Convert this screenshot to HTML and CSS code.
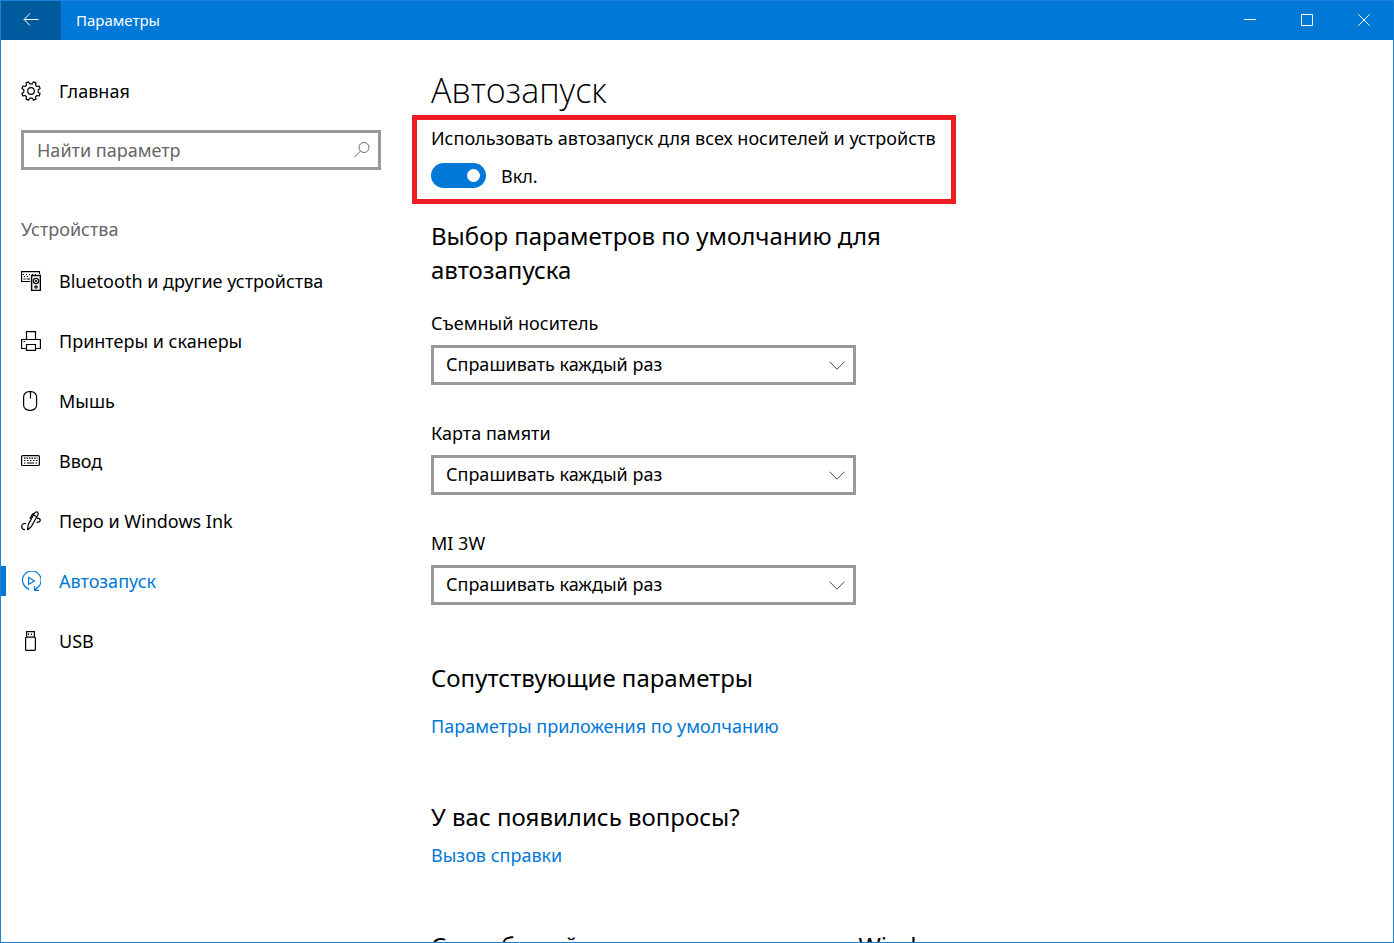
FILE: index.html
```html
<!DOCTYPE html>
<html lang="ru">

<head>
    <meta charset="utf-8">
    <link rel="stylesheet" href="styles.css">
    <title>Параметры</title>
</head>

<body>
    <div class="window">
        <header class="titlebar">
            <button class="back" aria-label="Назад">
                <svg width="16" height="14" viewBox="0 0 16 14"><path d="M15.500 6.500H1M7 .5L1 6.500L7 12.500"/></svg>
            </button>
            <span class="caption">Параметры</span>
            <div class="controls">
                <button aria-label="Свернуть"><svg width="12" height="12" viewBox="0 0 12 12"><path d="M0 5.500H12"/></svg></button>
                <button aria-label="Развернуть"><svg width="12" height="12" viewBox="0 0 12 12"><path d="M.5 .5H11.500V11.500H.5Z"/></svg></button>
                <button aria-label="Закрыть"><svg width="12" height="12" viewBox="0 0 12 12"><path d="M.3 .3L11.700 11.700M11.700 .3L.3 11.700"/></svg></button>
            </div>
        </header>

        <div class="content">
            <nav class="sidebar">
                <a class="item" href="#">
                    <svg class="icon" viewBox="0 0 20 20">
                        <path d="M7.500 .9L8.700 2.800H11.300L12.500 .9L15 1.900L14.500 4.200L15.800 5.500L18.100 5L19.100 7.500L17.200 8.700V11.300L19.100 12.500L18.100 15L15.800 14.500L14.500 15.800L15 18.100L12.500 19.100L11.300 17.200H8.700L7.500 19.100L5 18.100L5.500 15.800L4.200 14.500L1.900 15L.9 12.500L2.800 11.300V8.700L.9 7.500L1.900 5L4.200 5.500L5.500 4.200L5 1.900Z" stroke-linejoin="round"/>
                        <circle cx="10" cy="10" r="3.300"/>
                    </svg>
                    <span>Главная</span>
                </a>

                <div class="search">
                    <input type="text" placeholder="Найти параметр" aria-label="Найти параметр">
                    <svg class="search-icon" width="16" height="16" viewBox="0 0 16 16"><circle cx="10" cy="5.500" r="5"/><path d="M6.300 9.200L.3 15.200"/></svg>
                </div>

                <div class="group">Устройства</div>

                <a class="item" href="#">
                    <svg class="icon" viewBox="0 0 20 20">
                        <path d="M9 10.500H.6V.6H18.500V3"/>
                        <path d="M2 3.500H17" stroke-dasharray="1 2"/><path d="M3 5.500H9" stroke-dasharray="1 2"/><path d="M2.500 8H4.500M5.500 8H9"/>
                        <path d="M10.600 4.600H19.400V19.400H10.600Z" stroke-width="1.500"/>
                        <circle cx="15" cy="10" r="2.600"/><circle cx="15" cy="10" r=".5"/><circle cx="15" cy="16" r="1.200"/>
                    </svg>
                    <span>Bluetooth и другие устройства</span>
                </a>
                <a class="item" href="#">
                    <svg class="icon" viewBox="0 0 20 20">
                        <path d="M5.500 8V.6H14.500V8M5 17.500H.6V8.500H19.400V17.500H15M5.500 13.500H14.500V19.400H5.500ZM2.500 10.500H4"/>
                    </svg>
                    <span>Принтеры и сканеры</span>
                </a>
                <a class="item" href="#">
                    <svg class="icon" viewBox="0 0 20 20"><rect x="2.600" y=".6" width="13" height="18.800" rx="5.500"/><path d="M9.500 1V7.500"/></svg>
                    <span>Мышь</span>
                </a>
                <a class="item" href="#">
                    <svg class="icon" viewBox="0 0 20 20">
                        <rect x=".6" y="4.600" width="17.800" height="9.900" rx="1"/>
                        <path d="M3 7.200H16.500" stroke-dasharray="1.500 1"/><path d="M3 9.500H16.500" stroke-dasharray="1.500 1.500"/><path d="M3 12H4.500M6 12H13M14.500 12H16"/>
                    </svg>
                    <span>Ввод</span>
                </a>
                <a class="item" href="#">
                    <svg class="icon" viewBox="0 0 20 20">
                        <path d="M6.500 19L7.300 13.500L13.500 2.200Q15 .2 16.500 1.100Q17.800 2.200 16.800 4L10.500 15.400L6.500 19M8.800 7.800L11.500 3.200Q12 2.500 13.200 2.700M12.500 4L15.800 5.800"/>
                        <path d="M5 12.300Q.7 12.300 .7 15.600Q.8 18.600 4 18.900M16 7.200Q19.300 7.400 19.300 9.300Q19.200 11.200 15.500 11.400"/>
                    </svg>
                    <span>Перо и Windows Ink</span>
                </a>
                <a class="item active" href="#">
                    <svg class="icon" viewBox="0 0 20 20">
                        <path d="M7.500 19V17.900A9.300 9.300 0 1 1 16.800 16.300L13.700 19.200M13.600 15V19.400H18"/>
                        <path d="M7.600 6.500L13.400 10L7.600 13.500Z"/>
                    </svg>
                    <span>Автозапуск</span>
                </a>
                <a class="item" href="#">
                    <svg class="icon" viewBox="0 0 20 20"><path d="M5.600 6V.6H13.400V6"/><rect x="4.600" y="6.100" width="9.800" height="13.300" rx="1"/><path d="M7.500 2.500V4M10.500 2.500V4"/></svg>
                    <span>USB</span>
                </a>
            </nav>

            <main class="page">
                <h1>Автозапуск</h1>

                <section class="highlight">
                    <label for="autoplay">Использовать автозапуск для всех носителей и устройств</label>
                    <div class="toggle-row">
                        <input class="toggle" type="checkbox" id="autoplay" checked>
                        <span>Вкл.</span>
                    </div>
                </section>

                <h2 class="defaults">Выбор параметров по умолчанию для автозапуска</h2>

                <div class="field">
                    <label for="removable">Съемный носитель</label>
                    <div class="dropdown">
                        <select id="removable"><option>Спрашивать каждый раз</option></select>
                        <svg class="chevron" width="16" height="9" viewBox="0 0 16 9"><path d="M.5 .7L8 8.200L15.500 .7"/></svg>
                    </div>
                </div>
                <div class="field">
                    <label for="card">Карта памяти</label>
                    <div class="dropdown">
                        <select id="card"><option>Спрашивать каждый раз</option></select>
                        <svg class="chevron" width="16" height="9" viewBox="0 0 16 9"><path d="M.5 .7L8 8.200L15.500 .7"/></svg>
                    </div>
                </div>
                <div class="field">
                    <label for="phone">MI 3W</label>
                    <div class="dropdown">
                        <select id="phone"><option>Спрашивать каждый раз</option></select>
                        <svg class="chevron" width="16" height="9" viewBox="0 0 16 9"><path d="M.5 .7L8 8.200L15.500 .7"/></svg>
                    </div>
                </div>

                <h2 class="related">Сопутствующие параметры</h2>
                <a class="link" href="#">Параметры приложения по умолчанию</a>

                <h2>У вас появились вопросы?</h2>
                <a class="link" href="#">Вызов справки</a>

                <h2 class="feedback">Способствуйте совершенствованию Windows</h2>
            </main>
        </div>
    </div>
</body>

</html>
```
FILE: styles.css
```css
* {
    box-sizing: border-box;
}

body {
    margin: 0;
    font-family: "Noto Sans", "Open Sans", sans-serif;
    font-size: 18px;
    line-height: 24px;
    color: #000;
    background: #fff;
}

svg {
    display: block;
    fill: none;
    stroke: currentColor;
}

.window {
    display: flex;
    flex-direction: column;
    height: 100vh;
    border: 1px solid #1883d9;
    overflow: hidden;
}

/* title bar */
.titlebar {
    display: flex;
    flex: none;
    align-items: center;
    height: 39px;
    background: #0078d7;
    color: #fff;
}

.titlebar button {
    display: flex;
    align-items: center;
    justify-content: center;
    height: 39px;
    padding: 0 1px 2px 0;
    border: 0;
    background: none;
    color: #fff;
}

.titlebar .back {
    width: 60px;
    background: #005a9e;
}

.caption {
    margin-left: 15px;
    padding-bottom: 2px;
    font-size: 15px;
}

.controls {
    display: flex;
    margin-left: auto;
}

.controls button {
    width: 57px;
}

.content {
    display: flex;
    flex: 1;
    min-height: 0;
}

/* left menu */
.sidebar {
    flex: none;
    width: 430px;
    padding-top: 21px;
}

.item {
    display: flex;
    align-items: center;
    gap: 18px;
    height: 60px;
    padding-left: 20px;
    color: #000;
    text-decoration: none;
}

.icon {
    width: 20px;
    height: 20px;
    stroke-width: 1.2;
}

.active {
    color: #0078d7;
    background: linear-gradient(#0078d7, #0078d7) left center / 5px 30px no-repeat;
}

.search {
    position: relative;
    width: 360px;
    margin: 9px 0 0 20px;
}

.search input {
    display: block;
    width: 100%;
    height: 40px;
    padding: 0 40px 0 13px;
    border: 3px solid #999;
    font: inherit;
}

.search input::placeholder {
    color: #666;
    opacity: 1;
}

.search-icon {
    position: absolute;
    top: 12px;
    right: 11px;
    color: #666;
}

.group {
    margin: 47px 0 10px 20px;
    color: #666;
}

/* settings page */
.page {
    flex: 1;
    padding-top: 25px;
}

h1 {
    margin: 0;
    font-family: "Open Sans", "Noto Sans", sans-serif;
    font-size: 34px;
    font-weight: 300;
    line-height: 50px;
}

h2 {
    max-width: 525px;
    margin: 62px 0 9px;
    font-size: 24px;
    font-weight: 400;
    line-height: 34px;
}

h2.defaults {
    margin: 15px 0 24px;
}

h2.related {
    margin: 56px 0 19px;
}

h2.feedback {
    white-space: nowrap;
}

label {
    display: block;
}

.highlight {
    width: 544px;
    margin-left: -19px;
    padding: 6px 14px 11px;
    border: 5px solid #ed1c24;
}

.toggle-row {
    display: flex;
    align-items: center;
    gap: 15px;
    margin-top: 13px;
}

.toggle {
    appearance: none;
    display: flex;
    align-items: center;
    justify-content: flex-end;
    width: 55px;
    height: 25px;
    margin: 0;
    padding-right: 6px;
    border-radius: 13px;
    background: #0078d7;
}

.toggle::before {
    content: "";
    width: 13px;
    height: 13px;
    border-radius: 50%;
    background: #fff;
}

.field + .field {
    margin-top: 36px;
}

.dropdown {
    position: relative;
    width: 425px;
    margin-top: 10px;
}

select {
    appearance: none;
    display: block;
    width: 100%;
    height: 40px;
    padding: 0 40px 2px 12px;
    border: 3px solid #999;
    border-radius: 0;
    background: #fff;
    color: #000;
    font: inherit;
}

.chevron {
    position: absolute;
    top: 16px;
    right: 11px;
    color: #444;
    pointer-events: none;
}

.link {
    display: block;
    color: #0078d7;
    text-decoration: none;
}
```
